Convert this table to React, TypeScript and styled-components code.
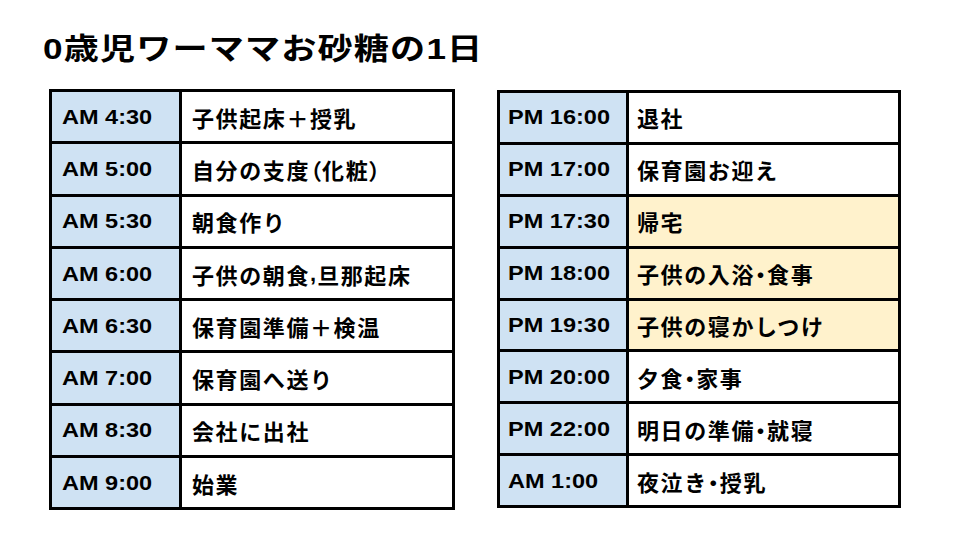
import React from 'react';
import styled, { createGlobalStyle } from 'styled-components';

type Row = { time: string; task: string; highlight?: boolean };

const morning: Row[] = [
  { time: 'AM 4:30', task: '子供起床＋授乳' },
  { time: 'AM 5:00', task: '自分の支度（化粧）' },
  { time: 'AM 5:30', task: '朝食作り' },
  { time: 'AM 6:00', task: '子供の朝食,旦那起床' },
  { time: 'AM 6:30', task: '保育園準備＋検温' },
  { time: 'AM 7:00', task: '保育園へ送り' },
  { time: 'AM 8:30', task: '会社に出社' },
  { time: 'AM 9:00', task: '始業' },
];

const evening: Row[] = [
  { time: 'PM 16:00', task: '退社' },
  { time: 'PM 17:00', task: '保育園お迎え' },
  { time: 'PM 17:30', task: '帰宅', highlight: true },
  { time: 'PM 18:00', task: '子供の入浴・食事', highlight: true },
  { time: 'PM 19:30', task: '子供の寝かしつけ', highlight: true },
  { time: 'PM 20:00', task: '夕食・家事' },
  { time: 'PM 22:00', task: '明日の準備・就寝' },
  { time: 'AM 1:00', task: '夜泣き・授乳' },
];

// punctuation in the slide is set proportionally, the rest stays full width
function TaskText({ text }: { text: string }) {
  const parts = text.split(/([（）・,])/).filter(Boolean);
  return (
    <>
      {parts.map((p, i) =>
        /^[（）・,]$/.test(p) ? <Punct key={i}>{p}</Punct> : <span key={i}>{p}</span>
      )}
    </>
  );
}

function Schedule({ rows, ...rest }: { rows: Row[] } & TableProps) {
  return (
    <Table {...rest}>
      {rows.map((r) => (
        <React.Fragment key={r.time}>
          <TimeCell>
            <TimeLabel>{r.time}</TimeLabel>
          </TimeCell>
          <TaskCell $highlight={r.highlight}>
            <TaskText text={r.task} />
          </TaskCell>
        </React.Fragment>
      ))}
    </Table>
  );
}

export default function App(): JSX.Element {
  return (
    <>
      <GlobalStyle />
      <Page>
        <Title>0歳児ワーママお砂糖の1日</Title>
        <Tables>
          <Schedule rows={morning} $width={406} $timeCol={130} $rowHeight={52.3} $pad={10} />
          <Schedule rows={evening} $width={404} $timeCol={129} $rowHeight={51.9} $pad={8} $offset={1} />
        </Tables>
      </Page>
    </>
  );
}

type TableProps = { $width: number; $timeCol: number; $rowHeight: number; $pad: number; $offset?: number };

const GlobalStyle = createGlobalStyle`
  html, body {
    margin: 0;
    padding: 0;
    background: #fff;
  }
  body {
    font-family: 'Liberation Sans', 'Noto Sans CJK JP', sans-serif;
    color: #000;
  }
`;

const Page = styled.div`
  width: 960px;
  height: 540px;
  overflow: hidden;
  background: #fff;
`;

const Title = styled.h1`
  margin: 31px 0 0 0;
  padding-left: 43px;
  font-size: 30px;
  line-height: 36px;
  font-weight: 700;
  letter-spacing: 1px;
  white-space: nowrap;
  transform: scaleX(1.17);
  transform-origin: 43px center;
`;

const Tables = styled.div`
  display: flex;
  align-items: flex-start;
  gap: 42px;
  margin-top: 22px;
  padding-left: 49px;
`;

const Table = styled.div<TableProps>`
  display: grid;
  width: ${(p) => p.$width}px;
  margin-top: ${(p) => p.$offset ?? 0}px;
  grid-template-columns: ${(p) => p.$timeCol}px 1fr;
  grid-auto-rows: ${(p) => p.$rowHeight}px;
  border-top: 3px solid #000;
  border-left: 3px solid #000;
  box-sizing: border-box;

  > div {
    padding-left: ${(p) => p.$pad}px;
  }
`;

const Cell = styled.div`
  display: flex;
  align-items: center;
  box-sizing: border-box;
  border-right: 3px solid #000;
  border-bottom: 3px solid #000;
  font-weight: 700;
  white-space: nowrap;
`;

const TimeCell = styled(Cell)`
  background: #cfe2f3;
  font-size: 21px;
`;

const TimeLabel = styled.span`
  display: inline-block;
  transform: scaleX(1.12);
  transform-origin: left center;
`;

const TaskCell = styled(Cell)<{ $highlight?: boolean }>`
  background: ${(p) => (p.$highlight ? '#fff2cc' : '#fff')};
  font-size: 22px;
  letter-spacing: 1.6px;
`;

const Punct = styled.span`
  font-feature-settings: 'palt';
  letter-spacing: 1px;
`;
